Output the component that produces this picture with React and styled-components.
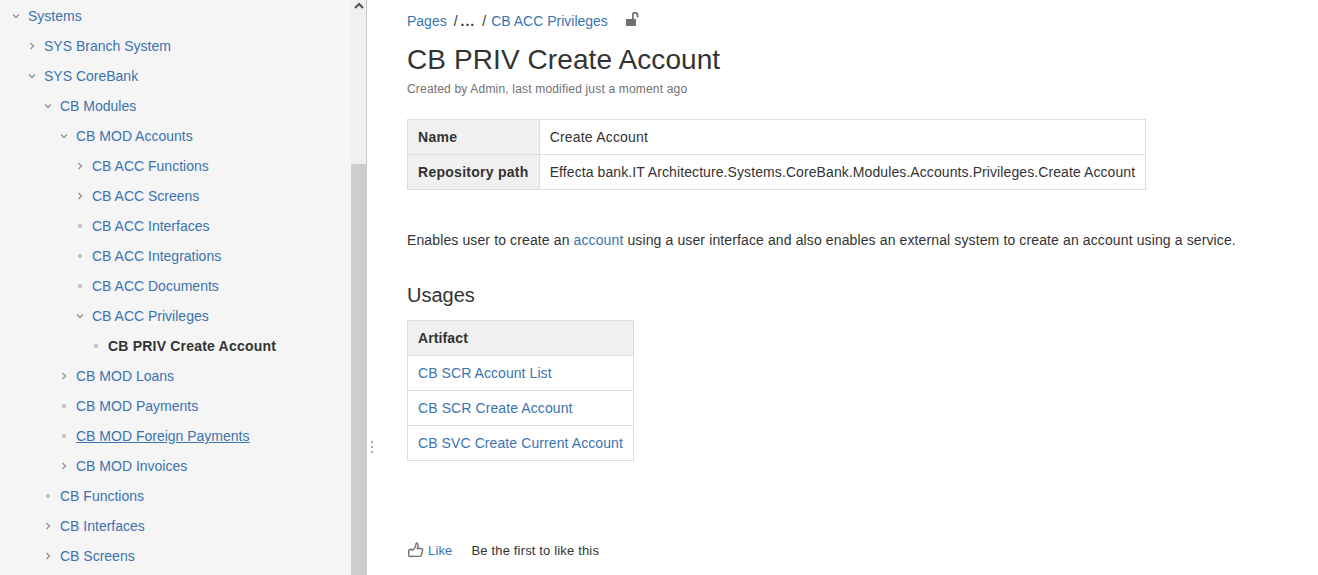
import React from "react";
import styled, { createGlobalStyle } from "styled-components";

const Global = createGlobalStyle`
  html, body { margin: 0; padding: 0; height: 575px; overflow: hidden; background: #fff; }
  body { font-family: "Liberation Sans", Arial, sans-serif; font-size: 14px; color: #333; }
  #root { height: 575px; }
`;

const Page = styled.div`
  display: flex;
  height: 575px;
  overflow: hidden;
`;

const Sidebar = styled.nav`
  width: 351px;
  flex: none;
  height: 575px;
  overflow: hidden;
  background: #f5f5f5;
  padding-top: 1px;
  box-sizing: border-box;
`;

const Row = styled.div`
  display: flex;
  align-items: center;
  height: 30px;
  padding-left: ${(p) => p.$level * 16 + 6}px;
`;

const Marker = styled.span`
  width: 22px;
  flex: none;
  height: 16px;
  display: flex;
  align-items: center;
  justify-content: flex-start;
  padding-left: 5px;
  box-sizing: border-box;
`;

const Dot = styled.span`
  width: 4px;
  height: 4px;
  border-radius: 50%;
  background: #bbb;
  margin-left: 3px;
`;

const TreeLink = styled.a`
  color: #3b73af;
  text-decoration: ${(p) => (p.$under ? "underline" : "none")};
`;

const Current = styled.span`
  color: #333;
  font-weight: 700;
  letter-spacing: 0.2px;
`;

const Scrollbar = styled.div`
  width: 15px;
  flex: none;
  display: flex;
  flex-direction: column;
  background: #f0f0f0;
  border-right: 1px solid #c8c8c8;
`;

const ScrollTop = styled.div`
  height: 164px;
  flex: none;
  display: flex;
  justify-content: center;
  align-items: flex-start;
  padding-top: 2px;
  box-sizing: border-box;
`;

const Thumb = styled.div`
  flex: 1;
  background: #cdcdcd;
  margin-right: -1px;
`;

const Main = styled.main`
  flex: 1;
  position: relative;
  padding: 13px 0 0 40px;
  box-sizing: border-box;
  height: 575px;
`;

const Grip = styled.span`
  position: absolute;
  left: 4px;
  top: 441px;
  display: flex;
  flex-direction: column;
  gap: 3px;
  & > i {
    width: 2px;
    height: 2px;
    background: #aaa;
    display: block;
  }
`;

const Breadcrumbs = styled.div`
  display: flex;
  align-items: center;
  height: 16px;
  line-height: 16px;
  color: #333;
`;

const Crumb = styled.a`
  color: #3b73af;
  text-decoration: none;
`;

const Sep = styled.span`
  margin: ${(p) => p.$m};
  color: #333;
`;

const Ellipsis = styled.span`
  font-weight: 700;
  letter-spacing: 1px;
`;

const LockWrap = styled.span`
  display: flex;
  margin-left: 18px;
  margin-top: -5px;
`;

const Title = styled.h1`
  margin: 15px 0 0;
  font-size: 28px;
  font-weight: 400;
  line-height: 32px;
  letter-spacing: 0.09px;
  color: #333;
`;

const Meta = styled.div`
  margin-top: 5px;
  font-size: 12px;
  line-height: 16px;
  letter-spacing: 0.18px;
  color: #707070;
`;

const Table = styled.table`
  border-collapse: collapse;
  margin-top: ${(p) => p.$mt}px;
  line-height: 20px;
`;

const Head = styled.th`
  border: 1px solid #ddd;
  padding: 7px 10px;
  text-align: left;
  color: #333;
  font-size: 14px;
  white-space: nowrap;
  background: #f0f0f0;
  font-weight: 700;
  letter-spacing: ${(p) => p.$ls || 0}px;
`;

const Cell = styled.td`
  border: 1px solid #ddd;
  padding: 7px 10px;
  text-align: left;
  color: #333;
  font-size: 14px;
  white-space: nowrap;
  letter-spacing: ${(p) => p.$ls || 0}px;
`;

const Para = styled.p`
  margin: 40px 0 0;
  line-height: 20px;
  letter-spacing: 0.12px;
  color: #333;
`;

const Inline = styled.a`
  color: #3b73af;
  text-decoration: none;
`;

const Heading = styled.h2`
  margin: 30px 0 0;
  font-size: 20px;
  font-weight: 400;
  line-height: 30px;
  color: #333;
`;

const LikeBar = styled.div`
  display: flex;
  align-items: center;
  margin-top: 79px;
  height: 20px;
  font-size: 13px;
  letter-spacing: 0.16px;
  color: #333;
`;

const LikeLink = styled.a`
  display: flex;
  align-items: center;
  gap: 4px;
  color: #3b73af;
  margin-right: 19px;
`;

const ThumbIcon = styled.svg`
  margin-left: 1px;
`;

const Chevron = ({ open }) => (
  <svg width="10" height="10" viewBox="0 0 10 10" fill="none" stroke="#999" strokeWidth="1.5">
    {open ? <polyline points="2,3.5 5,6.5 8,3.5" /> : <polyline points="3.5,2 6.5,5 3.5,8" />}
  </svg>
);

const tree = [
  [0, "open", "Systems"],
  [1, "closed", "SYS Branch System"],
  [1, "open", "SYS CoreBank"],
  [2, "open", "CB Modules"],
  [3, "open", "CB MOD Accounts"],
  [4, "closed", "CB ACC Functions"],
  [4, "closed", "CB ACC Screens"],
  [4, "dot", "CB ACC Interfaces"],
  [4, "dot", "CB ACC Integrations"],
  [4, "dot", "CB ACC Documents"],
  [4, "open", "CB ACC Privileges"],
  [5, "dot", "CB PRIV Create Account", "current"],
  [3, "closed", "CB MOD Loans"],
  [3, "dot", "CB MOD Payments"],
  [3, "dot", "CB MOD Foreign Payments", "under"],
  [3, "closed", "CB MOD Invoices"],
  [2, "dot", "CB Functions"],
  [2, "closed", "CB Interfaces"],
  [2, "closed", "CB Screens"],
];

export default function App() {
  return (
    <Page>
      <Global />
      <Sidebar>
        {tree.map(([level, kind, label, flag]) => (
          <Row key={label} $level={level}>
            <Marker>
              {kind === "dot" ? <Dot /> : <Chevron open={kind === "open"} />}
            </Marker>
            {flag === "current" ? (
              <Current>{label}</Current>
            ) : (
              <TreeLink $under={flag === "under"}>{label}</TreeLink>
            )}
          </Row>
        ))}
      </Sidebar>
      <Scrollbar>
        <ScrollTop>
          <svg width="10" height="8" viewBox="0 0 10 8" fill="none" stroke="#505050" strokeWidth="2">
            <polyline points="1,6 5,2 9,6" />
          </svg>
        </ScrollTop>
        <Thumb />
      </Scrollbar>
      <Main>
        <Grip><i /><i /><i /></Grip>
        <Breadcrumbs>
          <Crumb>Pages</Crumb>
          <Sep $m="0 3px 0 7px">/</Sep>
          <Ellipsis>...</Ellipsis>
          <Sep $m="0 5px 0 7px">/</Sep>
          <Crumb>CB ACC Privileges</Crumb>
          <LockWrap>
            <svg width="14" height="14" viewBox="0 0 14 14">
              <rect x="0" y="7" width="10" height="7" fill="#707070" />
              <path d="M6.800 7V3a2.400 2.400 0 0 1 4.800 0V5.500" fill="none" stroke="#707070" strokeWidth="1.700" />
            </svg>
          </LockWrap>
        </Breadcrumbs>
        <Title>CB PRIV Create Account</Title>
        <Meta>Created by Admin, last modified just a moment ago</Meta>
        <Table $mt={22}>
          <tbody>
            <tr><Head $ls={0.27}>Name</Head><Cell $ls={0.2}>Create Account</Cell></tr>
            <tr><Head $ls={0.27}>Repository path</Head><Cell $ls={0.09}>Effecta bank.IT Architecture.Systems.CoreBank.Modules.Accounts.Privileges.Create Account</Cell></tr>
          </tbody>
        </Table>
        <Para>
          Enables user to create an <Inline>account</Inline> using a user interface and also enables an external system to create an account using a service.
        </Para>
        <Heading>Usages</Heading>
        <Table $mt={10}>
          <tbody>
            <tr><Head $ls={0.12}>Artifact</Head></tr>
            <tr><Cell $ls={0.07}><Inline>CB SCR Account List</Inline></Cell></tr>
            <tr><Cell $ls={0.1}><Inline>CB SCR Create Account</Inline></Cell></tr>
            <tr><Cell $ls={0.09}><Inline>CB SVC Create Current Account</Inline></Cell></tr>
          </tbody>
        </Table>
        <LikeBar>
          <LikeLink>
            <ThumbIcon width="16" height="16" viewBox="0 0 16 16" fill="none" stroke="#707070" strokeWidth="1.400">
              <path d="M4.500 7.500H2c-.8 0-1.300.6-1.300 1.300v4.400c0 .8.500 1.300 1.300 1.300h2.500" />
              <path d="M3.800 8.500C6 7.500 7.800 5 8 1.700c0-.7 1-.9 1.500-.3.800 1 .6 3.400-.2 5.100h4c1 0 1.600.9 1.300 1.800l-1.300 5c-.2.700-.8 1.100-1.500 1.100H6.500c-1 0-1.800-.4-2.700-.4" />
            </ThumbIcon>
            Like
          </LikeLink>
          Be the first to like this
        </LikeBar>
      </Main>
    </Page>
  );
}
